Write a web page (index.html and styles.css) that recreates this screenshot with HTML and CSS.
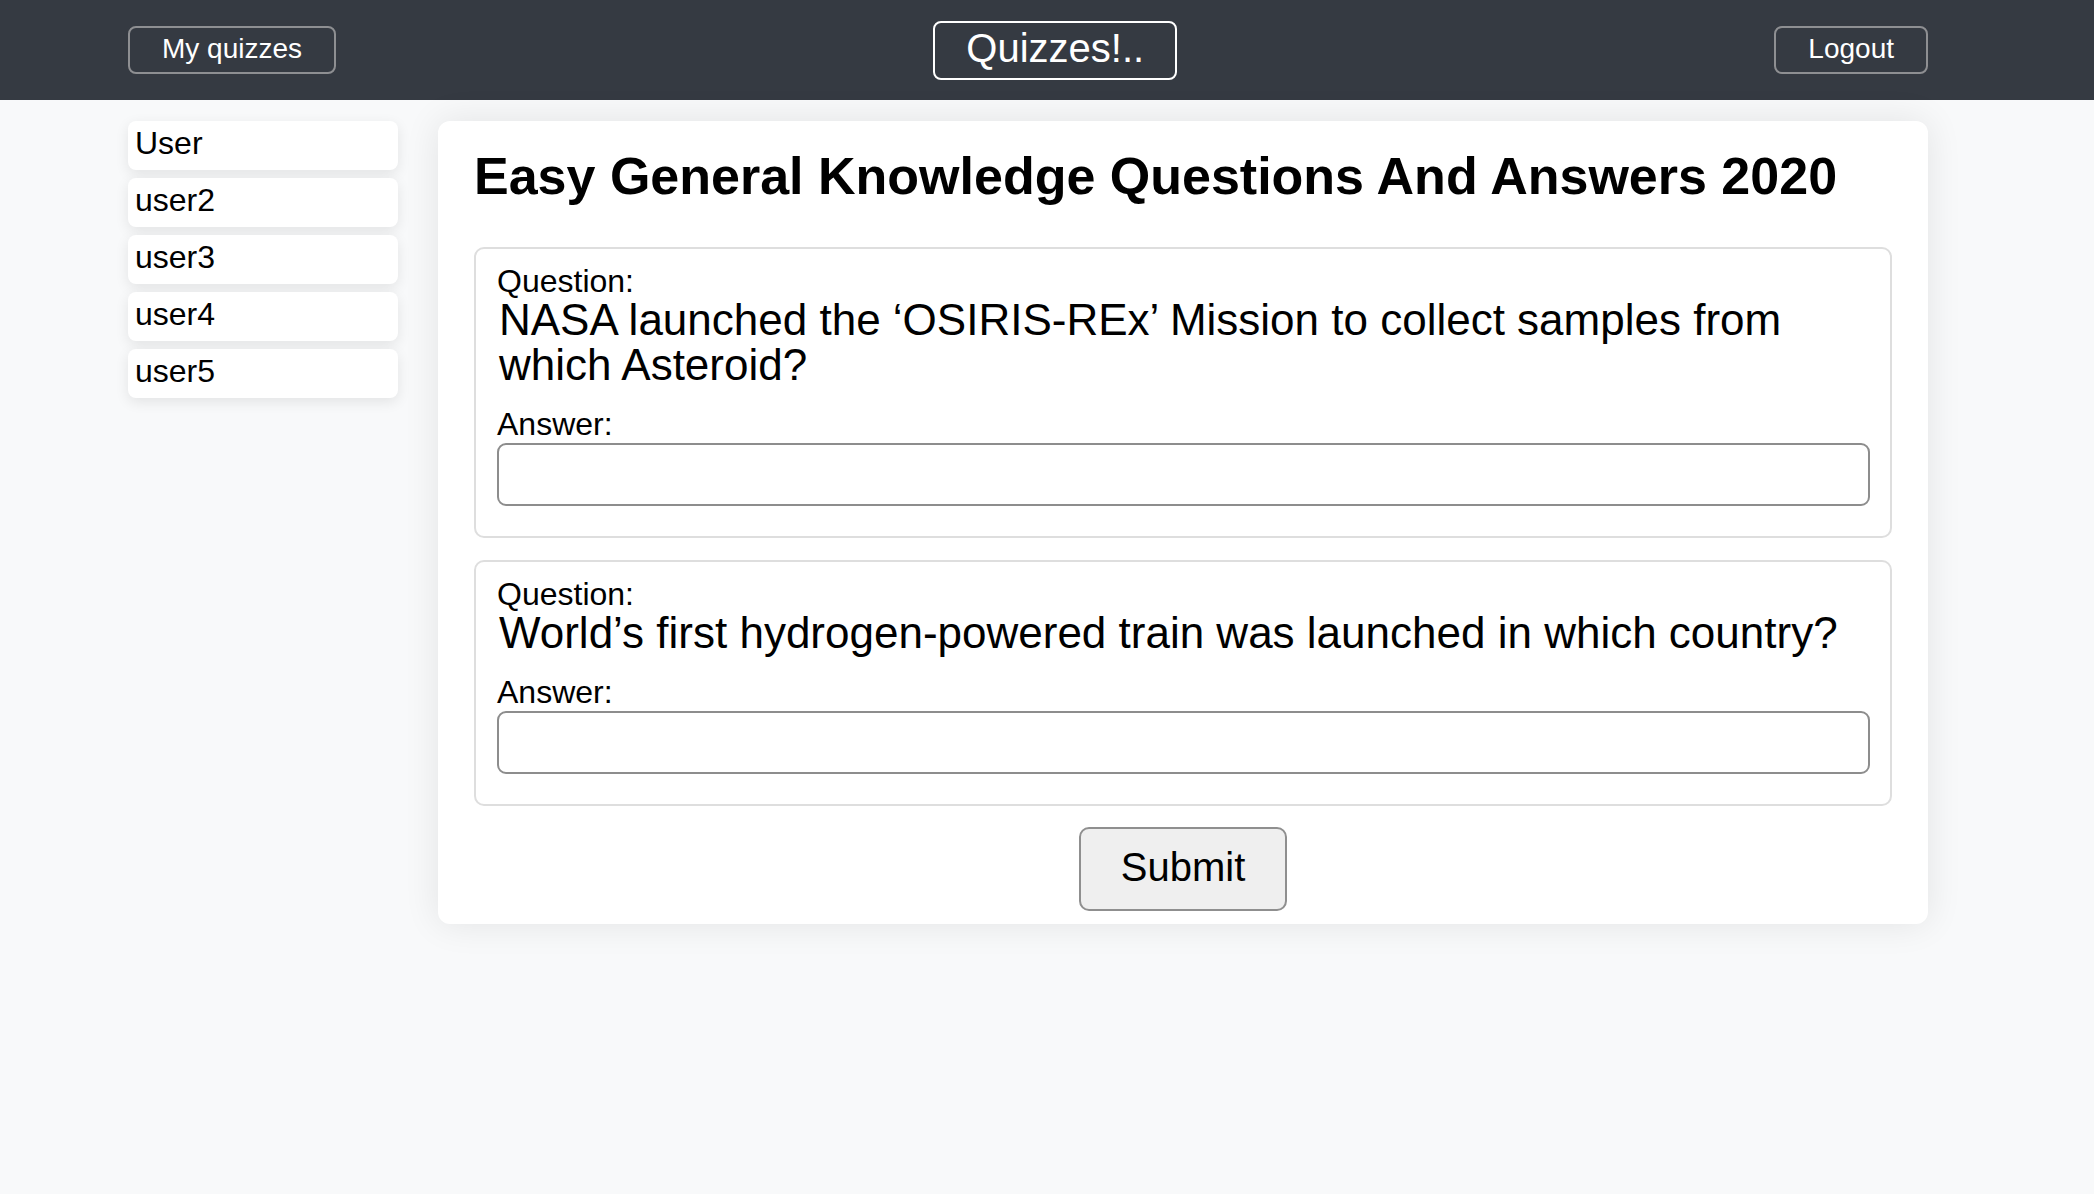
FILE: index.html
```html
<!DOCTYPE html>
<html lang="en">
<head>
<meta charset="utf-8">
<title>Quizzes!..</title>
<link rel="stylesheet" href="styles.css">
</head>
<body>
<header class="topbar">
  <div class="container topbar-inner">
    <button class="nav-btn" type="button">My quizzes</button>
    <a class="brand" href="#">Quizzes!..</a>
    <button class="nav-btn" type="button">Logout</button>
  </div>
</header>
<main class="container layout">
  <aside class="sidebar">
    <div class="user-item">User</div>
    <div class="user-item">user2</div>
    <div class="user-item">user3</div>
    <div class="user-item">user4</div>
    <div class="user-item">user5</div>
  </aside>
  <section class="card">
    <h1 class="quiz-title">Easy General Knowledge Questions And Answers 2020</h1>
    <form class="quiz-form">
      <div class="question">
        <label class="field-label">Question:</label>
        <p class="question-text">NASA launched the ‘OSIRIS-REx’ Mission to collect samples from which Asteroid?</p>
        <label class="field-label answer-label">Answer:</label>
        <input class="answer-input" type="text">
      </div>
      <div class="question">
        <label class="field-label">Question:</label>
        <p class="question-text">World’s first hydrogen-powered train was launched in which country?</p>
        <label class="field-label answer-label">Answer:</label>
        <input class="answer-input" type="text">
      </div>
      <div class="actions">
        <button class="submit-btn" type="button">Submit</button>
      </div>
    </form>
  </section>
</main>
</body>
</html>
```
FILE: styles.css
```css
* {
  box-sizing: border-box;
}

html, body {
  margin: 0;
  padding: 0;
}

body {
  background: #f8f9fa;
  color: #000;
  font-family: "Liberation Sans", Arial, Helvetica, sans-serif;
  min-height: 1194px;
}

.container {
  width: 1800px;
  margin-left: 128px;
}

/* Top bar */
.topbar {
  background: #353a42;
  height: 100px;
}

.topbar-inner {
  height: 100px;
  display: flex;
  align-items: center;
  justify-content: space-between;
}

.nav-btn {
  font-family: inherit;
  font-size: 28px;
  color: #fff;
  background: transparent;
  border: 2px solid #8e8f92;
  border-radius: 8px;
  height: 48px;
  padding: 0 32px 2px;
  line-height: 42px;
  cursor: pointer;
}

.brand {
  display: block;
  font-size: 40px;
  color: #fff;
  text-decoration: none;
  border: 2px solid #fff;
  border-radius: 8px;
  height: 59px;
  padding: 0 31px 5px;
  line-height: 50px;
}

/* Layout */
.layout {
  display: flex;
  align-items: flex-start;
  gap: 40px;
  padding-top: 21px;
}

.sidebar {
  width: 270px;
  flex: none;
  display: flex;
  flex-direction: column;
  gap: 8px;
}

.user-item {
  background: #fff;
  border-radius: 8px;
  height: 49px;
  padding: 6px 9px 11px 7px;
  font-size: 32px;
  line-height: 32px;
  box-shadow: 0 4px 14px rgba(0, 0, 0, 0.09);
}

/* Card */
.card {
  flex: 1;
  background: #fff;
  border-radius: 12px;
  padding: 29px 36px 13px;
  box-shadow: 0 0 36px rgba(0, 0, 0, 0.09);
}

.quiz-title {
  margin: 0 0 45px;
  font-size: 52px;
  line-height: 52px;
  font-weight: 700;
}

.quiz-form {
  margin: 0;
}

.question {
  border: 2px solid #dedede;
  border-radius: 10px;
  padding: 16px 20px 30px 21px;
  margin-bottom: 22px;
}

.question + .question {
  margin-bottom: 21px;
}

.field-label {
  display: block;
  font-size: 32px;
  line-height: 32px;
}

.question-text {
  margin: 0;
  padding-left: 2px;
  font-size: 44px;
  line-height: 45px;
}

.answer-label {
  margin-top: 21px;
}

.answer-input {
  display: block;
  width: 100%;
  height: 63px;
  margin-top: 3px;
  border: 2px solid #8d8d8d;
  border-radius: 9px;
  background: #fff;
  font-family: inherit;
  font-size: 32px;
  padding: 0 12px;
}

.actions {
  display: flex;
  justify-content: center;
}

.submit-btn {
  font-family: inherit;
  font-size: 40px;
  color: #000;
  background: #efefef;
  border: 2px solid #8f8f8f;
  border-radius: 10px;
  width: 208px;
  height: 84px;
  padding: 0 0 4px;
  line-height: 76px;
  cursor: pointer;
}
```
